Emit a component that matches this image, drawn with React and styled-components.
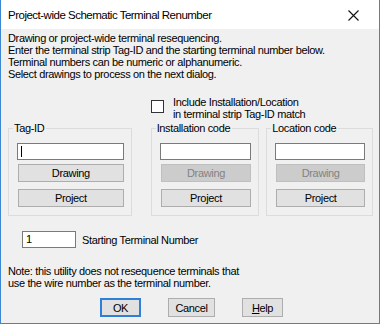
import React from "react";
import styled, { createGlobalStyle } from "styled-components";

const GlobalStyle = createGlobalStyle`
  html, body {
    margin: 0;
    padding: 0;
    background: #ffffff;
  }
  * {
    box-sizing: border-box;
  }
`;

const App = () => {
  return (
    <>
      <GlobalStyle />
      <Window>
        <TitleBar>
          <Title>Project-wide Schematic Terminal Renumber</Title>
          <Close>
            <svg width="11" height="11" viewBox="0 0 11 11">
              <path d="M0.5 0.5 L10.5 10.5 M10.5 0.5 L0.5 10.5" stroke="#111" strokeWidth="1.1" />
            </svg>
          </Close>
        </TitleBar>
        <Body>
          <Intro>
            <div>Drawing or project-wide terminal resequencing.</div>
            <div>Enter the terminal strip Tag-ID and the starting terminal number below.</div>
            <div>Terminal numbers can be numeric or alphanumeric.</div>
            <div>Select drawings to process on the next dialog.</div>
          </Intro>
          <CheckRow>
            <CheckBox />
            <CheckLabel>
              <div>Include Installation/Location</div>
              <div>in terminal strip Tag-ID match</div>
            </CheckLabel>
          </CheckRow>
          <Groups>
            <Group $width={124} $mr={19}>
              <Legend>Tag-ID</Legend>
              <TextBox>
                <Caret />
              </TextBox>
              <Button>Drawing</Button>
              <Button $gap={7}>Project</Button>
            </Group>
            <Group $width={109} $mr={7}>
              <Legend>Installation code</Legend>
              <TextBox />
              <Button disabled>Drawing</Button>
              <Button $gap={7}>Project</Button>
            </Group>
            <Group $width={107}>
              <Legend>Location code</Legend>
              <TextBox />
              <Button disabled>Drawing</Button>
              <Button $gap={7}>Project</Button>
            </Group>
          </Groups>
          <StartRow>
            <SmallBox>1</SmallBox>
            <span>Starting Terminal Number</span>
          </StartRow>
          <Note>
            <div>Note: this utility does not resequence terminals that</div>
            <div>use the wire number as the terminal number.</div>
          </Note>
          <Actions>
            <DialogButton $default $width={41}>OK</DialogButton>
            <DialogButton $width={47}>Cancel</DialogButton>
            <DialogButton $width={41}>
              <u>H</u>elp
            </DialogButton>
          </Actions>
        </Body>
      </Window>
    </>
  );
};

const Window = styled.div`
  width: 380px;
  height: 324px;
  display: flex;
  flex-direction: column;
  background: #f0f0f0;
  border: 1px solid #3d86d1;
  border-top: none;
  font-family: "Liberation Sans", Arial, sans-serif;
  font-size: 11px;
  letter-spacing: -0.35px;
  color: #000;
  overflow: hidden;
`;

const TitleBar = styled.div`
  height: 29px;
  flex-shrink: 0;
  background: #ffffff;
  display: flex;
  align-items: center;
  justify-content: space-between;
  padding: 0 20px 0 7px;
`;

const Title = styled.span`
  font-family: "Liberation Sans", Arial, sans-serif;
  font-size: 11.5px;
  letter-spacing: -0.5px;
`;

const Close = styled.span`
  display: flex;
  align-items: center;
  margin-top: 1px;
`;

const Body = styled.div`
  padding: 3px 6px 0 7px;
  display: flex;
  flex-direction: column;
`;

const Intro = styled.div`
  line-height: 12px;
`;

const CheckRow = styled.div`
  display: flex;
  align-items: flex-start;
  margin: 16px 0 0 143px;
  line-height: 12px;
`;

const CheckBox = styled.span`
  width: 13px;
  height: 13px;
  margin-top: 4px;
  border: 1px solid #333;
  background: #fff;
  flex-shrink: 0;
`;

const CheckLabel = styled.div`
  margin-left: 9px;
`;

const Groups = styled.div`
  display: flex;
  margin-top: 2px;
`;

const Group = styled.fieldset`
  width: ${(p) => p.$width}px;
  margin: 0 ${(p) => p.$mr || 0}px 0 0;
  padding: 8px 7px 8px 8px;
  border: 1px solid #dcdcdc;
  min-width: 0;
  display: flex;
  flex-direction: column;
`;

const Legend = styled.legend`
  padding: 0 2px 0 1px;
  margin-left: -4px;
  line-height: 13px;
  font-size: 11px;
`;

const TextBox = styled.div`
  height: 17px;
  background: #fff;
  border: 1px solid #7a7a7a;
  display: flex;
  align-items: center;
  padding-left: 3px;
`;

const Caret = styled.span`
  width: 1px;
  height: 11px;
  background: #000;
`;

const Button = styled.div`
  height: 18px;
  margin-top: ${(p) => p.$gap || 4}px;
  margin-left: 1px;
  display: flex;
  align-items: center;
  justify-content: center;
  background: ${(p) => (p.disabled ? "#cccccc" : "#e1e1e1")};
  border: 1px solid ${(p) => (p.disabled ? "#bfbfbf" : "#adadad")};
  color: ${(p) => (p.disabled ? "#838383" : "#000")};
`;

const StartRow = styled.div`
  display: flex;
  align-items: center;
  margin: 15px 0 0 14px;
  gap: 6px;
`;

const SmallBox = styled.div`
  width: 54px;
  height: 17px;
  background: #fff;
  border: 1px solid #7a7a7a;
  padding-left: 3px;
  line-height: 15px;
`;

const Note = styled.div`
  margin-top: 17px;
  line-height: 12px;
`;

const Actions = styled.div`
  display: flex;
  justify-content: center;
  gap: 27px;
  margin: 9px 0 0 2px;
`;

const DialogButton = styled.div`
  width: ${(p) => p.$width}px;
  height: 19px;
  display: flex;
  align-items: center;
  justify-content: center;
  background: #e1e1e1;
  border: ${(p) => (p.$default ? "2px solid #2f7ed8" : "1px solid #adadad")};
`;

export default App;
